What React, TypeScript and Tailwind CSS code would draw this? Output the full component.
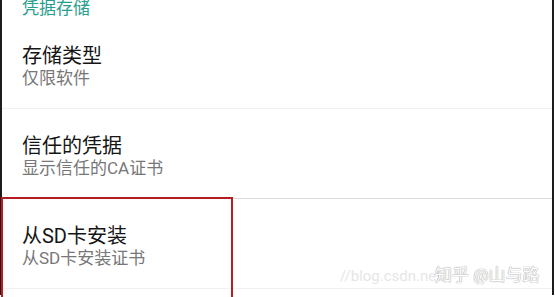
export default function App() {
  const items = [
    { title: "存储类型", sub: "仅限软件", line: "border-[#f0f0f0]" },
    { title: "信任的凭据", sub: "显示信任的CA证书", line: "border-[#dcdcdc]" },
    { title: "从SD卡安装", sub: "从SD卡安装证书", line: "border-[#f0f0f0]" },
  ];

  return (
    <div className="relative w-[555px] h-[297px] overflow-hidden bg-white font-['Roboto','Noto_Sans_CJK_SC',sans-serif]">
      <div className="mr-[1px] h-full border-l-2 border-r-2 border-[#1c1c1c]">
        {/* section header */}
        <div className="-mt-[2px] pl-[20px] text-[17px] leading-[21px] text-[#2a9d8f]">
          凭据存储
        </div>

        {/* list */}
        {items.map((it) => (
          <div key={it.title} className={`border-b ${it.line} pl-[20px] pt-[25px] pb-[19px]`}>
            <div className="text-[20px] leading-[24px] text-[#151515]">{it.title}</div>
            <div className="-mt-[1px] text-[17px] leading-[22px] text-[#777777]">{it.sub}</div>
          </div>
        ))}
      </div>

      {/* red highlight box */}
      <div className="absolute left-[1px] top-[197px] w-[232px] h-[120px] border-2 border-[#b51d22]"></div>

      {/* watermark */}
      <div className="absolute left-[340px] top-[266px] whitespace-nowrap text-[15px] leading-[20px] text-[#e6e6e6]">
        //blog.csdn.net
      </div>
      <div className="absolute left-[435px] top-[265px] whitespace-nowrap text-[17px] leading-[20px] text-white [text-shadow:0_0_1px_#9a9a9a,0_0_1px_#9a9a9a]">
        知乎 @山与路
      </div>
    </div>
  );
}
